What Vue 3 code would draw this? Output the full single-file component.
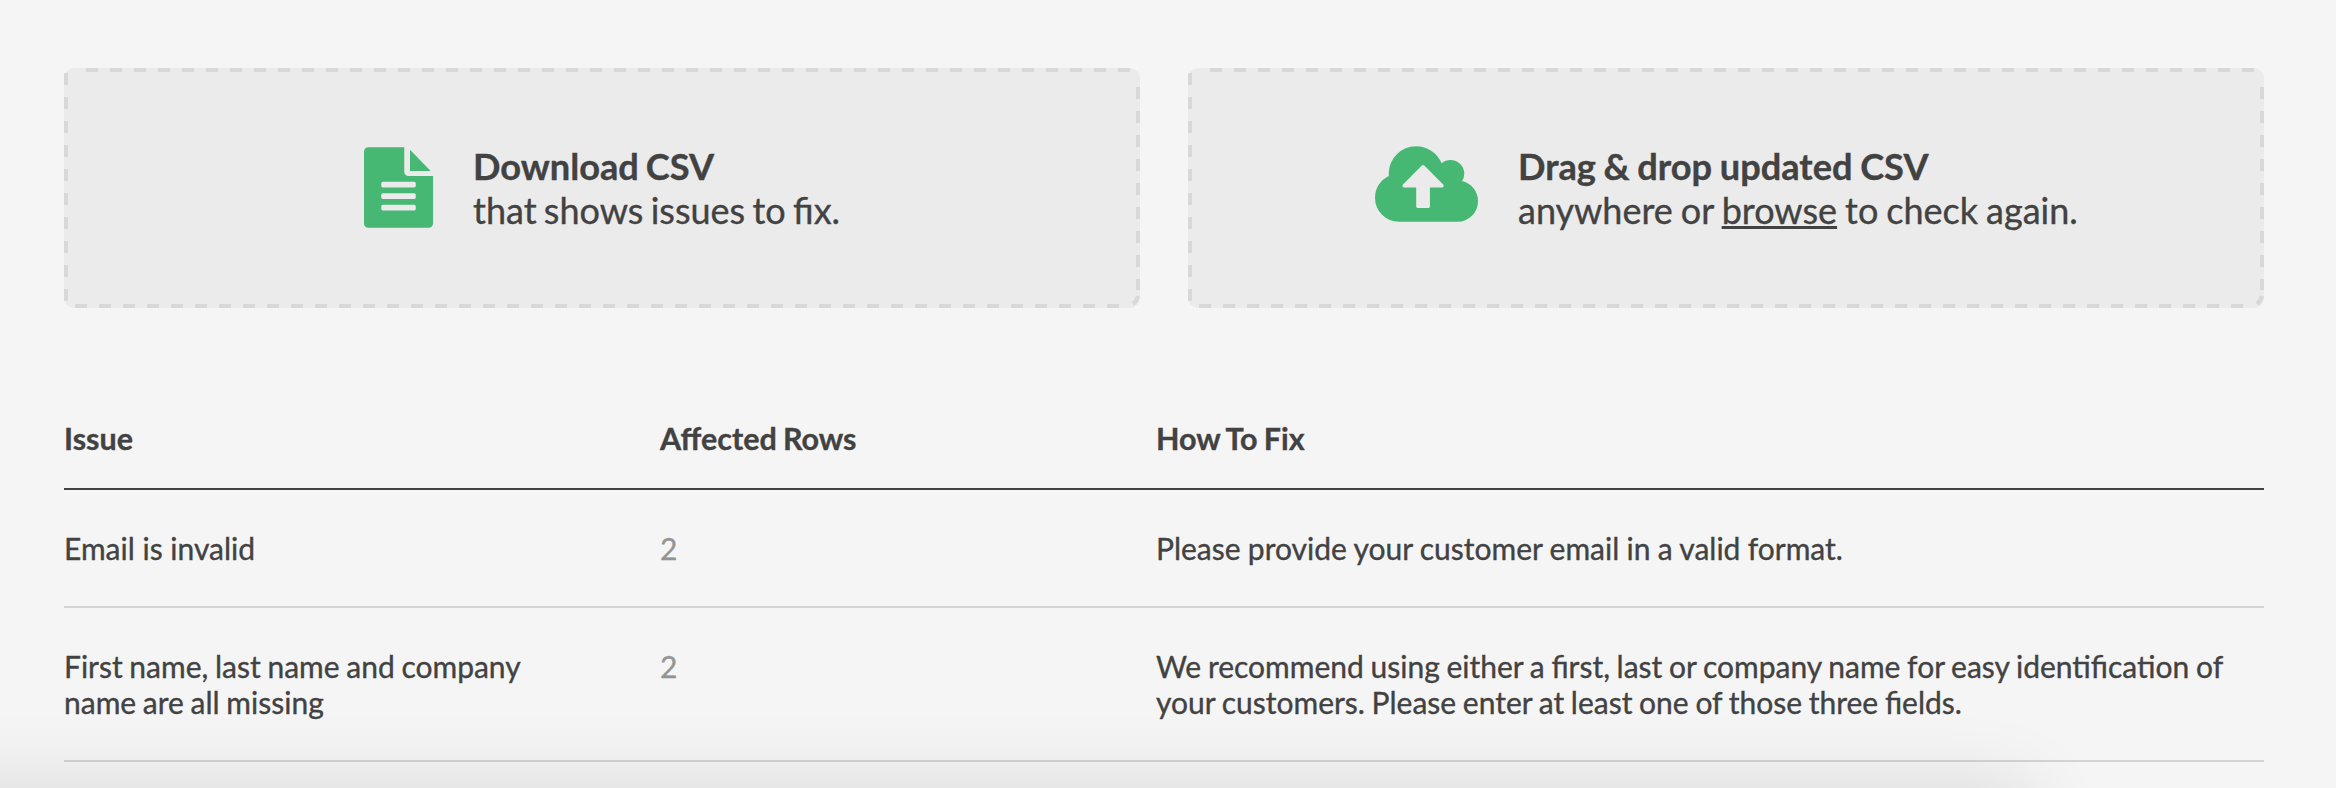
<script setup>
const rows = [
  { issue: 'Email is invalid', count: 2, fix: 'Please provide your customer email in a valid format.' },
  {
    issue: 'First name, last name and company name are all missing',
    count: 2,
    fix: 'We recommend using either a first, last or company name for easy identification of your customers. Please enter at least one of those three fields.',
  },
]
</script>

<template>
  <main class="page">
    <section class="cards">
      <div class="card download">
        <svg class="dashes" width="1076" height="240" viewBox="0 0 1076 240">
          <path d="M22 2H1066" />
          <path d="M1074 19V222" />
          <path d="M1074 228Q1073 233 1069 236" />
          <path d="M11 238H1062" />
          <path d="M2 5V233" />
        </svg>
        <svg class="file-icon" viewBox="0 -128 1536 1792">
          <path d="M1484 400H1024V-72zM992 512h544v1056q0 40-28 68t-68 28H96q-40 0-68-28t-28-68V-32q0-40 28-68t68-28h800v544q0 40 28 68t68 28zM1152 1248v-64q0-14-9-23t-23-9H416q-14 0-23 9t-9 23v64q0 14 9 23t23 9h704q14 0 23-9t9-23zM1152 992v-64q0-14-9-23t-23-9H416q-14 0-23 9t-9 23v64q0 14 9 23t23 9h704q14 0 23-9t9-23zM1152 736v-64q0-14-9-23t-23-9H416q-14 0-23 9t-9 23v64q0 14 9 23t23 9h704q14 0 23-9t9-23z" />
        </svg>
        <p class="lead"><strong>Download CSV</strong><br />that shows issues to fix.</p>
      </div>
      <div class="card upload">
        <svg class="dashes" width="1076" height="240" viewBox="0 0 1076 240">
          <path d="M22 2H1070" />
          <path d="M1074 19V222" />
          <path d="M1074 228Q1073 233 1069 236" />
          <path d="M11 238H1062" />
          <path d="M2 5V233" />
        </svg>
        <svg class="cloud-icon" viewBox="0 128 1920 1408">
          <path d="M1280 864q0-14-9-23l-352-352q-9-9-23-9t-23 9l-351 351q-10 12-10 24 0 14 9 23t23 9h224v352q0 13 9.500 22.500t22.500 9.500h192q13 0 22.500-9.500t9.500-22.500v-352h224q13 0 22.500-9.500t9.500-22.500zM1920 1152q0 159-112.500 271.500t-271.500 112.500h-1088q-185 0-316.500-131.500t-131.500-316.500q0-130 70-240t188-165q-2-30-2-43 0-212 150-362t362-150q156 0 285.500 87t188.500 231q71-62 166-62 106 0 181 75t75 181q0 76-41 138 130 31 213.500 135.500t83.500 238.500z" />
        </svg>
        <p class="lead"><strong>Drag &amp; drop updated CSV</strong><br />anywhere or <a class="browse">browse</a> to check again.</p>
      </div>
    </section>

    <table class="issues">
      <thead>
        <tr><th class="c1">Issue</th><th class="c2">Affected Rows</th><th>How To Fix</th></tr>
      </thead>
      <tbody>
        <tr v-for="row in rows" :key="row.issue">
          <td class="issue">{{ row.issue }}</td>
          <td class="count">{{ row.count }}</td>
          <td>{{ row.fix }}</td>
        </tr>
      </tbody>
    </table>
    <div class="shade"></div>
  </main>
</template>

<style>
body { background: #f5f5f5; }
</style>

<style scoped>
.page {
  position: relative;
  box-sizing: border-box;
  height: 788px;
  padding: 68px 72px 0 64px;
  overflow: hidden;
  background: #f5f5f5;
  color: #424242;
  font: 30px/36px Lato, sans-serif;
  -webkit-text-stroke: 0.35px currentColor;
}
.cards { display: grid; grid-template-columns: 1076px 1076px; gap: 48px; }
.card {
  position: relative;
  box-sizing: border-box;
  display: flex;
  height: 240px;
  border-radius: 10px;
  background: #ebebeb;
}
.download { padding-left: 300px; }
.upload { padding-left: 187px; }
.dashes { position: absolute; inset: 0; }
.dashes path { fill: none; stroke: #d8d8d8; stroke-width: 4; stroke-dasharray: 12 12; }
.file-icon, .cloud-icon { flex: none; fill: #46b874; }
.file-icon { width: 69px; height: 81px; margin: 79px 40px 0 0; }
.cloud-icon { width: 103px; height: 76px; margin: 78px 40px 0 0; }
.lead { margin: 76px 0 0; font-size: 36px; line-height: 44px; white-space: nowrap; word-spacing: -1.9px; }
.upload .lead { word-spacing: -1.2px; }
.lead strong { font-size: 36.2px; }
.browse { text-decoration: underline; }
.issues { width: 2200px; margin-top: 92px; border-collapse: separate; border-spacing: 0; table-layout: fixed; }
.issues th {
  padding: 20px 0 32px;
  border-bottom: 2px solid #424242;
  font-size: 30.5px;
  font-weight: 700;
  text-align: left;
  word-spacing: -1.2px;
}
.c1 { width: 596px; }
.c2 { width: 496px; }
.c1, .c2 { box-sizing: border-box; }
.issues td { padding: 40px 0; border-bottom: 2px solid #d4d4d4; vertical-align: top; word-spacing: -1px; }
.issues tbody tr:first-child td { word-spacing: -0.4px; }
.issues td.issue { padding-right: 120px; }
.issues tbody tr:first-child td.issue { word-spacing: 0; }
.issues td.count { color: #949494; }
.shade {
  position: absolute;
  top: 788px;
  left: -100px;
  width: 2130px;
  height: 100px;
  box-shadow: 0 0 80px rgba(0, 0, 0, 0.12);
}
</style>
